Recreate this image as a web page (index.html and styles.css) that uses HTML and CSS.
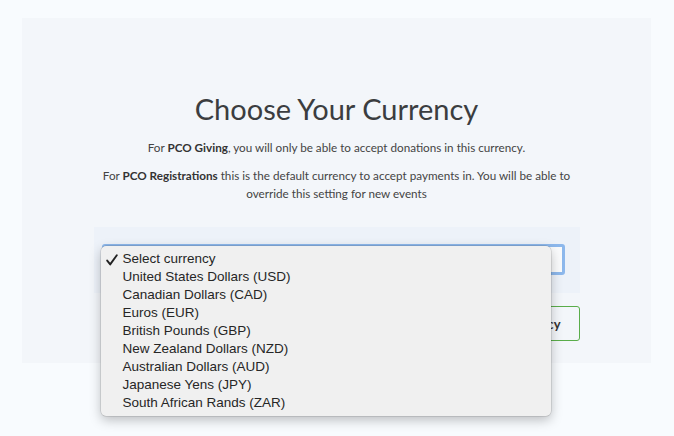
FILE: index.html
```html
<!DOCTYPE html>
<html>
<head>
<meta charset="utf-8">
<link rel="stylesheet" href="styles.css">
</head>
<body>
<div class="card">
  <h1 class="title">Choose Your Currency</h1>
  <p class="note">For <b>PCO Giving</b>, you will only be able to accept donations in this currency.</p>
  <p class="note note-2">For <b>PCO Registrations</b> this is the default currency to accept payments in. You will be able to override this setting for new events</p>
  <div class="band">
    <div class="select-wrap">
      <div class="select"></div>
      <ul class="menu">
        <li class="opt checked"><svg class="check" width="12" height="12" viewBox="0 0 12 12"><path d="M1.2 6.6 L4.2 10.4 L10.8 1.2" fill="none" stroke="#222" stroke-width="1.9" stroke-linecap="round" stroke-linejoin="round"/></svg>Select currency</li>
        <li class="opt">United States Dollars (USD)</li>
        <li class="opt">Canadian Dollars (CAD)</li>
        <li class="opt">Euros (EUR)</li>
        <li class="opt">British Pounds (GBP)</li>
        <li class="opt">New Zealand Dollars (NZD)</li>
        <li class="opt">Australian Dollars (AUD)</li>
        <li class="opt">Japanese Yens (JPY)</li>
        <li class="opt">South African Rands (ZAR)</li>
      </ul>
    </div>
  </div>
  <div class="actions">
    <button class="btn">Save Currency</button>
  </div>
</div>
</body>
</html>
```
FILE: styles.css
```css
html, body {
  margin: 0;
  padding: 0;
}
html {
  min-height: 100%;
  background: #f8fbfe;
}
body {
  min-height: 436px;
  box-sizing: border-box;
  font-family: Lato, "Open Sans", sans-serif;
  color: #444;
  padding: 18px 23px 0 22px;
}
.card {
  background: #f3f6fa;
  height: 345px;
  box-sizing: border-box;
  padding-top: 74px;
  display: flex;
  flex-direction: column;
  align-items: center;
}
.title {
  margin: 0;
  font-weight: 400;
  font-size: 29px;
  line-height: 34px;
  color: #3b3d40;
}
.note {
  margin: 12px 0 0;
  font-size: 11.7px;
  line-height: 18px;
  text-align: center;
  width: 480px;
}
.note-2 {
  margin-top: 10px;
}
.note b {
  font-weight: 700;
  color: #333;
}
.band {
  margin-top: 25px;
  width: 486px;
  height: 66px;
  box-sizing: border-box;
  background: #edf2f9;
  padding: 17px 15px 0 8px;
}
.select-wrap {
  position: relative;
}
.select {
  height: 31px;
  box-sizing: border-box;
  border: 3px solid #8db8ec;
  border-radius: 3px;
  background: #fafbfc;
}
.menu {
  position: absolute;
  left: -1px;
  top: 2px;
  width: 450px;
  margin: 0;
  padding: 4px 0;
  list-style: none;
  background: #f0f0f0;
  border-radius: 5px;
  box-shadow: 0 0 0 0.5px rgba(0,0,0,0.18), 0 4px 12px rgba(0,0,0,0.25);
  font-family: "Liberation Sans", Arial, sans-serif;
  font-size: 13.5px;
  color: #262626;
  z-index: 5;
}
.opt {
  height: 18px;
  line-height: 18px;
  padding-left: 22px;
  position: relative;
}
.check {
  position: absolute;
  left: 5px;
  top: 4px;
}
.actions {
  width: 486px;
  display: flex;
  justify-content: flex-end;
  margin-top: 13px;
}
.btn {
  height: 35px;
  padding: 0 18px;
  border: 1px solid #5aad4a;
  border-radius: 3px;
  background: transparent;
  font-family: Lato, sans-serif;
  font-weight: 700;
  font-size: 13px;
  color: #333;
}
```
